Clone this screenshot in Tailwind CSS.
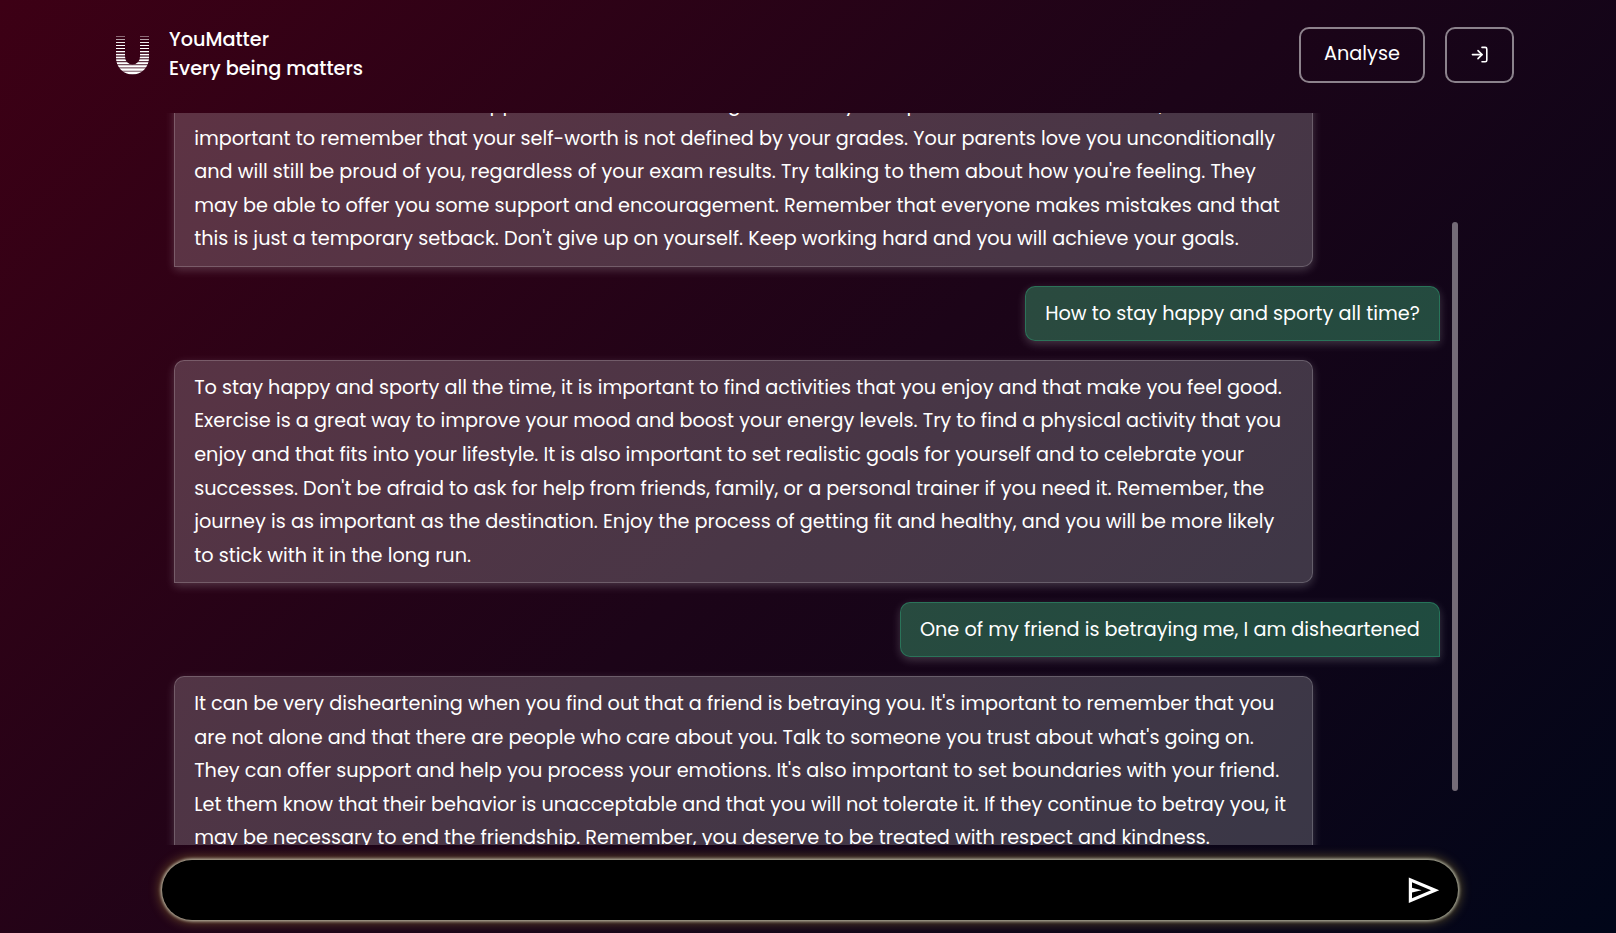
<!DOCTYPE html>
<html lang="en">
<head>
<meta charset="utf-8">
<title>YouMatter</title>
<script src="https://cdn.jsdelivr.net/npm/@tailwindcss/browser@4"></script>
</head>
<body class="h-[933px] overflow-hidden bg-[linear-gradient(135deg,#3d0015_0%,#1c0418_50%,#010619_100%)] font-[Poppins,Inter,sans-serif] text-[19.260px] text-white">
<div class="flex h-full flex-col">
  <header class="flex h-[113px] shrink-0 items-start justify-between pl-[116px] pr-[102px] pt-[27px]">
    <div class="flex items-start">
      <svg class="mt-[9px] h-[39px] w-[33px]" viewBox="0 0 33 39" fill="#fff">
        <clipPath id="u"><path d="M0 0H9V20.500A7.500 8 0 0 0 24 20.500V0H33V22A16.500 16.500 0 0 1 0 22Z"/></clipPath>
        <g clip-path="url(#u)">
          <rect y="0" width="33" height=".6" opacity=".7"/><rect y="3" width="33" height=".8" opacity=".8"/><rect y="6" width="33" height=".9"/><rect y="9" width="33" height="1"/><rect y="12" width="33" height="1"/><rect y="15" width="33" height="1.300"/><rect y="17.900" width="33" height="1.500"/><rect y="20.600" width="33" height="1.700"/><rect y="23.300" width="33" height="1.900"/><rect y="26.200" width="33" height="2.100"/><rect y="29.200" width="33" height="2.300"/><rect y="32.300" width="33" height="2.500"/><rect y="35.500" width="33" height="3"/>
        </g>
      </svg>
      <div class="-mt-px ml-5 font-medium leading-[28.800px]">
        <div>YouMatter</div>
        <div>Every being matters</div>
      </div>
    </div>
    <div class="flex gap-5">
      <button class="flex h-14 w-[126px] items-center justify-center rounded-[10px] border-2 border-white/50 pb-[2px]">Analyse</button>
      <button class="flex h-14 w-[69px] items-center justify-center rounded-[10px] border-2 border-white/50" aria-label="Log in">
        <svg class="size-[19.200px]" viewBox="0 0 24 24" fill="none" stroke="#fff" stroke-width="2" stroke-linecap="round" stroke-linejoin="round"><path d="M15 3h4a2 2 0 0 1 2 2v14a2 2 0 0 1-2 2h-4"/><path d="m10 17 5-5-5-5"/><path d="M15 12H3"/></svg>
      </button>
    </div>
  </header>

  <main class="ml-[162px] flex h-[732px] w-[1296px] shrink-0 overflow-hidden">
    <div class="-mt-[35.600px] flex w-[1278px] flex-col gap-[19.400px] pl-3 leading-[33.600px]">
      <div class="w-[1139px] shrink-0 self-start whitespace-nowrap rounded-[10px] rounded-bl-none border border-white/20 bg-white/20 px-[19.200px] py-[9.600px] shadow-[0_3px_10px_rgba(255,255,255,0.2)]">It's understandable to feel disappointed after not scoring as well as you expected in the examination, but it's<br>important to remember that your self-worth is not defined by your grades. Your parents love you unconditionally<br>and will still be proud of you, regardless of your exam results. Try talking to them about how you're feeling. They<br>may be able to offer you some support and encouragement. Remember that everyone makes mistakes and that<br>this is just a temporary setback. Don't give up on yourself. Keep working hard and you will achieve your goals.</div>
      <div class="shrink-0 self-end whitespace-nowrap rounded-[10px] rounded-br-none border border-[#34d399]/30 bg-[#51ed9d]/30 px-[19.200px] py-[9.600px] shadow-[0_3px_10px_rgba(255,255,255,0.2)]">How to stay happy and sporty all time?</div>
      <div class="w-[1139px] shrink-0 self-start whitespace-nowrap rounded-[10px] rounded-bl-none border border-white/20 bg-white/20 px-[19.200px] py-[9.600px] shadow-[0_3px_10px_rgba(255,255,255,0.2)]">To stay happy and sporty all the time, it is important to find activities that you enjoy and that make you feel good.<br>Exercise is a great way to improve your mood and boost your energy levels. Try to find a physical activity that you<br>enjoy and that fits into your lifestyle. It is also important to set realistic goals for yourself and to celebrate your<br>successes. Don't be afraid to ask for help from friends, family, or a personal trainer if you need it. Remember, the<br>journey is as important as the destination. Enjoy the process of getting fit and healthy, and you will be more likely<br>to stick with it in the long run.</div>
      <div class="shrink-0 self-end whitespace-nowrap rounded-[10px] rounded-br-none border border-[#34d399]/30 bg-[#51ed9d]/30 px-[19.200px] py-[9.600px] shadow-[0_3px_10px_rgba(255,255,255,0.2)]">One of my friend is betraying me, I am disheartened</div>
      <div class="w-[1139px] shrink-0 self-start whitespace-nowrap rounded-[10px] rounded-bl-none border border-white/20 bg-white/20 px-[19.200px] py-[9.600px] shadow-[0_3px_10px_rgba(255,255,255,0.2)]">It can be very disheartening when you find out that a friend is betraying you. It's important to remember that you<br>are not alone and that there are people who care about you. Talk to someone you trust about what's going on.<br>They can offer support and help you process your emotions. It's also important to set boundaries with your friend.<br>Let them know that their behavior is unacceptable and that you will not tolerate it. If they continue to betray you, it<br>may be necessary to end the friendship. Remember, you deserve to be treated with respect and kindness.</div>
    </div>
    <div class="ml-3 mt-[109px] h-[569px] w-1.5 rounded-full bg-[#746b77]"></div>
  </main>

  <form class="ml-[162px] mt-[15px] flex h-[60px] w-[1296px] shrink-0 items-center justify-end rounded-full bg-black pr-4 shadow-[0_0_3px_1.500px_rgba(225,230,215,0.65),0_0_12px_2px_rgba(235,200,70,0.4)]">
    <svg class="size-[38.400px]" viewBox="0 -960 960 960" fill="#fff"><path d="M120-160v-640l760 320-760 320Zm80-120 474-200-474-200v140l240 60-240 60v140Z"/></svg>
  </form>
</div>
</body>
</html>
